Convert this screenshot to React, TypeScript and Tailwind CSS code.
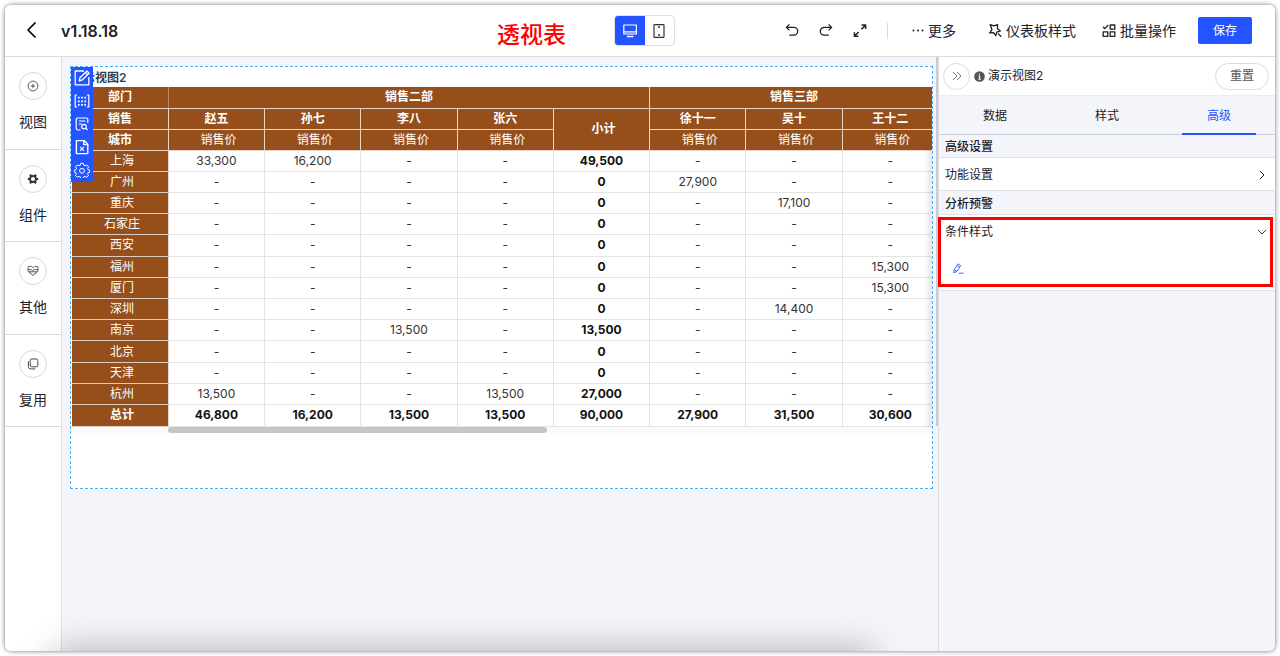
import type { ReactNode } from "react";

type IconProps = {
  className?: string;
  viewBox?: string;
  strokeWidth?: number;
  children: ReactNode;
};

function Icon({ className = "size-4", viewBox = "0 0 16 16", strokeWidth = 1.2, children }: IconProps) {
  return (
    <svg
      className={`${className} block shrink-0`}
      viewBox={viewBox}
      fill="none"
      stroke="currentColor"
      strokeWidth={strokeWidth}
      strokeLinejoin="round"
      aria-hidden
    >
      {children}
    </svg>
  );
}

const sideItems = [
  {
    label: "视图",
    icon: (
      <Icon className="size-3" viewBox="0 0 12 12" strokeWidth={0.8}>
        <circle cx="6" cy="6" r="4.9" />
        <path d="M6 3.8v4.4M3.8 6h4.4" />
      </Icon>
    ),
  },
  {
    label: "组件",
    icon: (
      <Icon className="size-3" viewBox="0 0 12 12" strokeWidth={1.8}>
        <circle cx="6" cy="6" r="3" />
        <path
          d="M3 1.6l1.2 1.6M9 1.6L7.8 3.2M.8 6h2M9.2 6h2M3 10.4l1.2-1.6M9 10.4L7.8 8.8"
          strokeWidth="2"
        />
      </Icon>
    ),
  },
  {
    label: "其他",
    icon: (
      <Icon className="size-3" viewBox="0 0 12 12" strokeWidth={0.8}>
        <path d="M2 1.4h2.6l1 1h1.2l1-1H10c.7 0 1 .4 1 1v3.4c0 .6-.4 1-1 1H2c-.6 0-1-.4-1-1V2.4c0-.6.4-1 1-1z" />
        <path d="M1 4.6h3.4l1.4 1 1.4-1H11M2.8 6.8v1.4L4.6 9 6 10.6 7.4 9l1.8-.8V6.8" />
      </Icon>
    ),
  },
  {
    label: "复用",
    icon: (
      <Icon className="size-3" viewBox="0 0 12 12" strokeWidth={0.9}>
        <rect x="3.2" y="1" width="7.6" height="7.8" rx="1.6" />
        <path d="M1.4 3.4v5.3a2.2 2.2 0 0 0 2.2 2.2h4.6" />
      </Icon>
    ),
  },
];

const widgetTools = [
  {
    label: "编辑",
    icon: (
      <Icon className="size-4" strokeWidth={1.3}>
        <path d="M10 1H1.2v13.8h13.6V7" />
        <path d="M5.2 10.8l.7-3 7-6.8 2.2 2.2-7 6.8zM11.4 2.6l2.2 2.2" />
      </Icon>
    ),
  },
  {
    label: "字段",
    icon: (
      <Icon className="size-4" strokeWidth={1.2}>
        <path d="M3.2 2H1.2v12h2M12.8 2h2v12h-2" />
        <path d="M4.8 3.8v9M8 3.8v9M11.2 3.8v9" strokeWidth="1.8" strokeDasharray="1.8 1.8" />
      </Icon>
    ),
  },
  {
    label: "查看数据",
    icon: (
      <Icon className="size-4" strokeWidth={1.2}>
        <path d="M6.5 14H4.2a2 2 0 0 1-2-2V3.4c0-.8.5-1.4 1.3-1.4h9c.8 0 1.3.6 1.3 1.4V7M4.8 5h6.6M4.8 8h3" />
        <circle cx="10" cy="10.6" r="2.3" />
        <path d="M11.8 12.2l2 1.9" />
      </Icon>
    ),
  },
  {
    label: "导出",
    icon: (
      <Icon className="size-4" strokeWidth={1.4}>
        <path d="M2.4 1.6h7.8l3.6 3.6v9.4H2.4zM9.8 1.6v4h4" />
        <path d="M6 7.8l4 4M10 7.8l-4 4" strokeWidth="1.2" />
      </Icon>
    ),
  },
  {
    label: "设置",
    icon: (
      <Icon className="size-4" strokeWidth={1}>
        <path d="M6.7 1.3h2.6l.4 1.9 1.2.6 1.8-.9 1.8 1.9-.9 1.7.4 1.2 1.8.4v2.1l-1.8.5-.5 1.1 1 1.7-1.9 1.8-1.6-1-1.3.5-.4 1.7H6.7l-.4-1.7-1.2-.5-1.7 1-1.9-1.8 1-1.7-.5-1.1-1.7-.5V8.1L2 7.7l.5-1.2-1-1.7 1.9-1.9 1.7.9 1.2-.6z" />
        <circle cx="8" cy="8.8" r="2.4" />
      </Icon>
    ),
  },
];

const people = ["赵五", "孙七", "李八", "张六"];
const people3 = ["徐十一", "吴十", "王十二"];

// column order: four sellers, subtotal, three sellers
const rows: [string, string[]][] = [
  ["上海", ["33,300", "16,200", "-", "-", "49,500", "-", "-", "-"]],
  ["广州", ["-", "-", "-", "-", "0", "27,900", "-", "-"]],
  ["重庆", ["-", "-", "-", "-", "0", "-", "17,100", "-"]],
  ["石家庄", ["-", "-", "-", "-", "0", "-", "-", "-"]],
  ["西安", ["-", "-", "-", "-", "0", "-", "-", "-"]],
  ["福州", ["-", "-", "-", "-", "0", "-", "-", "15,300"]],
  ["厦门", ["-", "-", "-", "-", "0", "-", "-", "15,300"]],
  ["深圳", ["-", "-", "-", "-", "0", "-", "14,400", "-"]],
  ["南京", ["-", "-", "13,500", "-", "13,500", "-", "-", "-"]],
  ["北京", ["-", "-", "-", "-", "0", "-", "-", "-"]],
  ["天津", ["-", "-", "-", "-", "0", "-", "-", "-"]],
  ["杭州", ["13,500", "-", "-", "13,500", "27,000", "-", "-", "-"]],
  ["总计", ["46,800", "16,200", "13,500", "13,500", "90,000", "27,900", "31,500", "30,600"]],
];

const SUBTOTAL_COL = 4;

function Header() {
  return (
    <header className="flex h-[52px] shrink-0 items-center border-b border-[#dcdcdc] bg-white pl-8 pr-[23px]">
      <div className="flex flex-1 items-center">
        <button type="button" aria-label="返回" className="-ml-3">
          <Icon className="h-5 w-3" viewBox="0 0 12 20" strokeWidth={1.7}>
            <path d="M10.5 1.5L3 9l7.5 7.5" />
          </Icon>
        </button>
        <h1 className="ml-6 text-[16px] leading-5 font-semibold text-[#1d2129]">v1.18.18</h1>
        <p className="ml-auto mr-12 pt-2 text-[23px] leading-7 font-medium text-[#ff0000]">透视表</p>
      </div>
      <div className="flex h-[31px] w-[61px] overflow-hidden rounded-[4px] border border-[#dcdfe8]">
        <button type="button" aria-label="桌面端" className="flex w-[31px] -m-px items-center justify-center bg-[#2454ff] text-white">
          <Icon className="h-4 w-4" strokeWidth={1.2}>
            <rect x="1.8" y="2" width="12.6" height="9" />
            <path d="M2 8.8h12" />
            <path d="M5 13.6h6.4" strokeWidth="1.5" />
          </Icon>
        </button>
        <button type="button" aria-label="移动端" className="flex flex-1 items-center justify-center text-[#333]">
          <Icon className="h-4 w-4" strokeWidth={1.2}>
            <rect x="3" y="1.6" width="10" height="12.8" rx="0.6" />
            <path d="M7 4h2M7 12h2" strokeWidth="1.5" />
          </Icon>
        </button>
      </div>
      <div className="flex flex-1 items-center justify-end text-[14px] leading-5 text-[#1d2129]">
        <button type="button" aria-label="撤销">
          <Icon className="size-[14px]" viewBox="0 0 14 14" strokeWidth={1.3}>
            <path d="M4.4 .4L1.4 3.4l3 3M1.4 3.4h7.4a3.9 3.9 0 0 1 0 7.8H4.2" />
          </Icon>
        </button>
        <button type="button" aria-label="重做" className="ml-5">
          <Icon className="size-[14px]" viewBox="0 0 14 14" strokeWidth={1.3}>
            <path d="M9.6 .4l3 3-3 3M12.6 3.4H5.2a3.9 3.9 0 0 0 0 7.8h4.6" />
          </Icon>
        </button>
        <button type="button" aria-label="全屏" className="ml-5">
          <Icon className="size-[14px]" viewBox="0 0 14 14" strokeWidth={1.5}>
            <path d="M8.6 1h4v4M12.4 1.2L8.4 5.2M1.4 8.2v4h4M1.6 12l4-4" />
          </Icon>
        </button>
        <span className="ml-5 h-4 w-px bg-[#d5d9e2]" />
        <button type="button" className="ml-6 flex items-center gap-1">
          <Icon className="size-3" viewBox="0 0 12 12">
            <g fill="currentColor" stroke="none">
              <circle cx="1.5" cy="5.5" r="1" />
              <circle cx="6" cy="5.5" r="1" />
              <circle cx="10.5" cy="5.5" r="1" />
            </g>
          </Icon>
          更多
        </button>
        <button type="button" className="ml-8 flex items-center gap-1">
          <Icon className="size-[14px]" viewBox="0 0 14 14" strokeWidth={1.3}>
            <path d="M2.2 .7l3.6 1.2L9.6.7l-.2 3.8 3 2.4-3.6 1.2-1 3.6-2.2-3-3.9.2 2.3-3.2z" />
            <path d="M10 9.4l3.2 3.4" />
          </Icon>
          仪表板样式
        </button>
        <button type="button" className="ml-[26px] flex items-center gap-1">
          <Icon className="size-[14px]" viewBox="0 0 14 14" strokeWidth={1.3}>
            <path d="M1 2.8l1.8 1.8L6.2 1" />
            <rect x="8.2" y="1" width="4.6" height="4.2" />
            <rect x="1.2" y="7.8" width="4.6" height="4.6" />
            <rect x="8.2" y="7.8" width="4.6" height="4.6" />
          </Icon>
          批量操作
        </button>
        <button type="button" className="ml-[22px] h-[27px] w-[54px] rounded-[2px] bg-[#2454ff] pt-px text-[12px] text-white">
          保存
        </button>
      </div>
    </header>
  );
}

function Sidebar() {
  return (
    <nav className="w-[57px] shrink-0 border-r border-[#dcdfe3] bg-white">
      <ul className="grid h-[370px] grid-rows-4">
        {sideItems.map((item) => (
          <li key={item.label} className="border-b border-[#dcdcdc]">
            <button type="button" className="flex w-full flex-col items-center pt-[15px] text-[14px] leading-5 text-[#1d2129]">
              <span className="flex size-7 items-center justify-center rounded-full border border-[#d5d8e3] text-[#333]">
                {item.icon}
              </span>
              <span className="mt-3">{item.label}</span>
            </button>
          </li>
        ))}
      </ul>
    </nav>
  );
}

function PivotTable() {
  const head = "border border-[#e6d5c8] bg-[#964f1b] p-0 text-white";
  return (
    <table className="w-[867px] table-fixed border-collapse text-center text-[12px] leading-4">
      <thead>
        <tr className="h-[21px]">
          <th className={`${head} border-r-[#b98a67] border-l-0 border-t-0`}>部门</th>
          <th colSpan={5} className={`${head} border-t-0`}>销售二部</th>
          <th colSpan={3} className={`${head} border-t-0`}>销售三部</th>
        </tr>
        <tr className="h-[21px]">
          <th className={`${head} border-l-0`}>销售</th>
          {people.map((name) => (
            <th key={name} className={head}>{name}</th>
          ))}
          <th rowSpan={2} className={`${head} pl-1`}>小计</th>
          {people3.map((name) => (
            <th key={name} className={head}>{name}</th>
          ))}
        </tr>
        <tr className="h-[21px]">
          <th className={`${head} border-l-0`}>城市</th>
          {[...people, ...people3].map((name) => (
            <th key={name} className={`${head} pl-1 font-normal`}>销售价</th>
          ))}
        </tr>
      </thead>
      <tbody className="h-[276px]">
        {rows.map(([city, values]) => {
          const total = city === "总计";
          return (
            <tr key={city} className="h-[21px]">
              <th className={`${head} border-l-0 border-y-[#dccbbf] pl-1 ${total ? "font-bold" : "font-normal"}`}>{city}</th>
              {values.map((value, i) => (
                <td
                  key={i}
                  className={`border border-[#e4e4e2] bg-white p-0 ${
                    total || i === SUBTOTAL_COL ? "font-bold text-[#111]" : "text-[#333]"
                  }`}
                >
                  {value}
                </td>
              ))}
            </tr>
          );
        })}
      </tbody>
    </table>
  );
}

function Widget() {
  return (
    <section className="relative h-[423px] border border-dashed border-[#4dabf7] bg-white">
      <h2 className="h-5 pt-[3px] text-[12px] leading-4 font-semibold text-[#2b4257]">演示视图2</h2>
      <div className="relative overflow-hidden pl-px">
        <PivotTable />
        <div className="absolute top-[63px] right-0 bottom-0 w-2 bg-linear-to-r from-transparent to-black/10" />
      </div>
      <div className="bg-[#fafafa] pl-[97px]">
        <div className="h-[6px] w-[379px] rounded-full bg-[#c6c6c6]" />
      </div>
      <div className="absolute top-0 left-0 flex w-[22px] flex-col items-center gap-[7px] bg-[#2454ff] pt-[3px] pb-1 text-white">
        {widgetTools.map((tool) => (
          <button key={tool.label} type="button" aria-label={tool.label}>
            {tool.icon}
          </button>
        ))}
      </div>
    </section>
  );
}

function SettingsPanel() {
  return (
    <aside className="w-[337px] shrink-0 border-l border-[#dcdcdc] text-[12px] leading-4 text-[#1d2129]">
      <div className="flex h-[39px] items-center border-b border-[#ececec] bg-white pr-[6px] pl-1">
        <button
          type="button"
          aria-label="收起"
          className="flex size-[27px] items-center justify-center rounded-full border border-[#d9dbe6] text-[#555]"
        >
          <Icon className="size-[10px]" viewBox="0 0 10 10" strokeWidth={0.8}>
            <path d="M1 1l4 4-4 4M5 1l4 4-4 4" />
          </Icon>
        </button>
        <Icon className="ml-1 size-[11px]" viewBox="0 0 11 11">
          <circle cx="5.5" cy="5.5" r="5.3" fill="#555" stroke="none" />
          <path d="M5.5 2.4v1.2M4.6 4.9h1v3.2M4.3 8.2h2.5" stroke="#fff" strokeWidth="1.1" />
        </Icon>
        <span className="ml-[3px]">演示视图2</span>
        <button type="button" className="ml-auto h-[27px] w-[54px] rounded-full border border-[#d9dbe6] text-[#555]">
          重置
        </button>
      </div>
      <div role="tablist" className="grid h-[39px] grid-cols-3 border-b border-[#c9ced8]">
        <button type="button" role="tab" aria-selected="false" className="pt-[2px]">数据</button>
        <button type="button" role="tab" aria-selected="false" className="pt-[2px]">样式</button>
        <button
          type="button"
          role="tab"
          aria-selected="true"
          className="-mb-px w-[74px] justify-self-center border-b-2 border-[#2454ff] pt-[2px] text-[#2454ff]"
        >
          高级
        </button>
      </div>
      <h3 className="flex h-[23px] items-center border-b border-[#dde1ea] pt-[2px] pl-[6px] font-medium">高级设置</h3>
      <button type="button" className="flex h-[33px] w-full items-center justify-between border-b border-[#dde1ea] bg-white pt-px pr-2 pl-[6px]">
        功能设置
        <Icon className="size-[10px]" viewBox="0 0 10 10" strokeWidth={1}>
          <path d="M3 1l4 4-4 4" />
        </Icon>
      </button>
      <h3 className="flex h-[24px] items-center border-b border-[#dde1ea] pt-[2px] pl-[6px] font-medium">分析预警</h3>
      <div className="relative h-[76px] border-b border-[#dde1ea] bg-white pt-[9px]">
        <button type="button" className="flex w-full items-center justify-between pr-2 pl-[6px]">
          条件样式
          <Icon className="size-[10px]" viewBox="0 0 10 10" strokeWidth={0.9}>
            <path d="M1 3l4 4 4-4" />
          </Icon>
        </button>
        <button type="button" aria-label="编辑条件样式" className="mt-[23px] ml-[14px] text-[#2454ff]">
          <Icon className="size-[11px]" viewBox="0 0 11 11" strokeWidth={0.9}>
            <path d="M.8 9.8l.5-3.3L5 .9l2.7 1.7-3.8 5.8zM4 2.6l2.6 1.7M1.3 6.7l2.5 1.6M5.8 10.2h4.8" />
          </Icon>
        </button>
        <div className="pointer-events-none absolute top-[2px] right-[2px] -left-px h-[70px] border-[3px] border-[#ff0000]" />
      </div>
    </aside>
  );
}

export default function App() {
  return (
    <div className="flex min-h-screen bg-white p-[5px] font-[Inter,'Noto_Sans_CJK_SC',sans-serif]">
      <div className="relative flex min-w-0 flex-1 flex-col overflow-hidden rounded-[6px] bg-[#f4f5fa] shadow-[0_0_5px_rgba(0,0,0,0.55)]">
        <Header />
        <div className="flex flex-1">
          <Sidebar />
          <main className="flex min-w-0 flex-1 items-start">
            <div className="min-w-0 flex-1 pt-[9px] pr-[3px] pl-2">
              <Widget />
            </div>
            <div className="h-[369px] w-[2px] bg-[#c9cbdb]" />
          </main>
          <SettingsPanel />
        </div>
        <div className="pointer-events-none absolute top-full right-[403px] left-[50px] h-10 shadow-[0_0_36px_rgba(0,0,0,0.3)]" />
      </div>
    </div>
  );
}
